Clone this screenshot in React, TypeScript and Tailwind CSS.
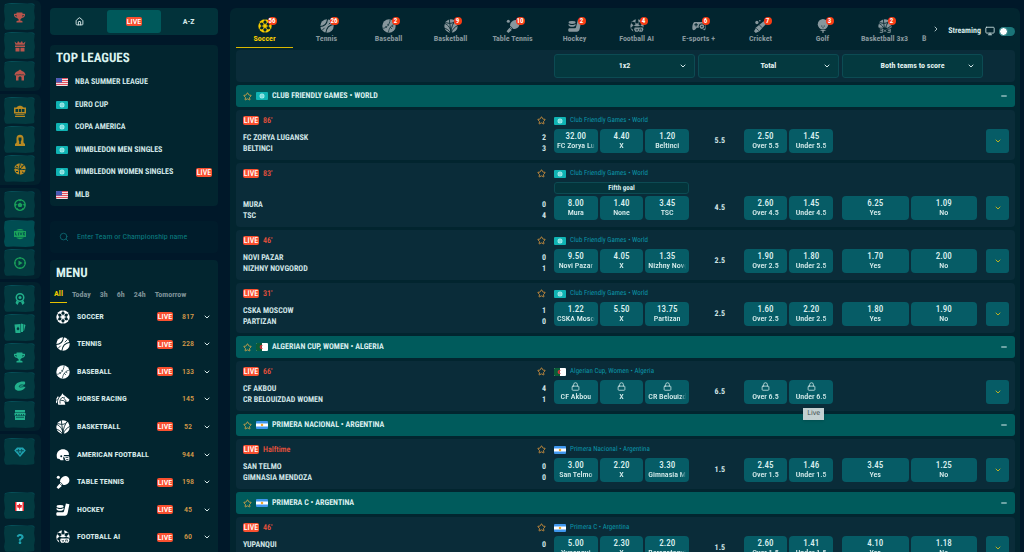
import React from 'react';
import { ChevronDown, ChevronRight, Home, Lock, Minus, Monitor, Search, Star } from 'lucide-react';
import { FaQuestion, FaTrophy } from 'react-icons/fa';

const CUT = '#03262f';

const spokes = [0, 60, 120, 180, 240, 300];

const SportIcon = ({ name, className }: { name: string; className?: string }) => (
  <svg viewBox="0 0 24 24" className={className} fill="currentColor" aria-hidden="true">
    {name === 'soccer' && (
      <>
        <circle cx="12" cy="12" r="11.5" />
        {spokes.map((a) => (
          <g key={a} transform={`rotate(${a} 12 12)`} fill={CUT}>
            <path d="M12 8.6 L9 6.5 L10 3.5 H14 L15 6.5 Z" />
            <path d="M11.3 0 H12.7 V4 H11.3 Z" />
          </g>
        ))}
        <circle cx="12" cy="12" r="4" stroke={CUT} strokeWidth="0.8" />
      </>
    )}
    {name === 'tennis' && (
      <>
        <circle cx="12" cy="12" r="11.5" />
        <path d="M0 13 C7 13 12 8 13 0 M24 9 C17 10 11 15 10 24" fill="none" stroke={CUT} strokeWidth="1.8" />
        <path d="M3 20 L8 15 M15 9 L20 4" fill="none" stroke={CUT} strokeWidth="1.4" />
      </>
    )}
    {name === 'baseball' && (
      <>
        <circle cx="12" cy="12" r="11.5" />
        <path d="M2 16 C8 15 13 10 14 1 M22 9 C17 10 12 15 11 23" fill="none" stroke={CUT} strokeWidth="1.2" />
        <path d="M6 12 L8 15 M9 9 L12 11 M14 14 L17 17 M17 11 L19 14" fill="none" stroke={CUT} strokeWidth="1.2" />
      </>
    )}
    {(name === 'basketball' || name === 'basketball3') && (
      <>
        <circle cx="12" cy="12" r="11.5" />
        <path
          d="M12 24 L9 0 M12 24 C12 14 4 8 0 7 M12 24 C8 19 4 16 0 16 M12 24 C12 14 16 6 20 2 M12 24 C15 17 19 13 24 11 M2 5 C8 9 16 8 19 3"
          fill="none"
          stroke={CUT}
          strokeWidth="1.5"
        />
        {name === 'basketball3' && (
          <>
            <rect x="0" y="15" width="24" height="9" fill={CUT} />
            <path d="M3 17 H8 V23 H3 M4 20 H8 M10 18 L14 22 M14 18 L10 22 M16 17 H21 V23 H16 M17 20 H21" fill="none" stroke="currentColor" strokeWidth="1.5" />
          </>
        )}
      </>
    )}
    {name === 'horse' && (
      <>
        <path d="M4 22 C2 17 4 10 9 6 L11 2 L13 5 C16 6 18 9 23 13 L22 16 L19 17 L14 15 L16 22 Z" />
        <path d="M1 13 L4 8 M0 19 L2 14" stroke="currentColor" strokeWidth="2" />
        <path d="M7 20 C6 14 8 10 12 9 M12 9 L18 16 M8 14 L14 15" fill="none" stroke={CUT} strokeWidth="1.4" />
        <circle cx="14" cy="9" r="1" fill={CUT} />
      </>
    )}
    {name === 'american' && (
      <>
        <path d="M2 18 C-1 8 5 2 12 2 C19 2 23 7 22 12 L14 12 L12 16 L13 21 H8 L6 19 Z" />
        <path d="M12 15 H22 V21 H17 L15 15 M16 18 H22" fill="none" stroke="currentColor" strokeWidth="1.7" />
        <circle cx="9" cy="14" r="1.7" fill={CUT} />
      </>
    )}
    {name === 'tabletennis' && (
      <>
        <path d="M7 15 C6 10 8 5 12 3 C17 0 23 3 23 9 C23 15 17 18 10 17 Z" />
        <path d="M6 15 L10 19 L4 24 L1 21 Z" />
        <circle cx="4" cy="4" r="2.6" />
        <path d="M6 11 L14 19" stroke={CUT} strokeWidth="1.3" />
      </>
    )}
    {name === 'hockey' && (
      <>
        <path d="M17 1 L23 2 L20 17 C19 21 17 22 13 22 H2 C0 22 0 16 2 16 H11 C13 16 14 15 14 13 Z" />
        <ellipse cx="7" cy="6" rx="6" ry="2.4" />
        <path d="M1 8 C3 11 11 11 13 8 V11 C11 14 3 14 1 11 Z" />
      </>
    )}
    {name === 'footballai' && (
      <>
        <circle cx="12" cy="12" r="11.5" />
        {spokes.map((a) => (
          <path key={a} transform={`rotate(${a} 12 11)`} d="M12 8 L9 6 L10.5 0 H13.5 L15 6 Z" fill={CUT} />
        ))}
        <rect x="5" y="12.5" width="19" height="11.5" rx="4" fill={CUT} />
        <path d="M8 14.5 H22 L23 18 L21 22 H16.5 L15 20.5 L13.5 22 H9 L7 18 Z" />
        <path d="M10 17 L12 20 L13.5 17 M16.5 20 V17 H19.5 V20" fill="none" stroke={CUT} strokeWidth="1.2" />
      </>
    )}
    {name === 'esports' && (
      <>
        <path d="M4 5 H20 C23 7 24 14 23 18 C21 21 18 18 16 15 H8 C6 18 3 21 1 18 C0 14 1 7 4 5 Z" />
        <path d="M7 7 V13 M4 10 H10" stroke={CUT} strokeWidth="1.8" />
        <circle cx="17" cy="13" r="5.5" fill={CUT} />
        <circle cx="17" cy="13" r="4" />
        <circle cx="17" cy="13" r="1.4" fill={CUT} />
      </>
    )}
    {name === 'cricket' && (
      <>
        <path d="M19 2 L23 6 L9 21 L3 24 L0 21 L4 14 Z" />
        <circle cx="5" cy="6" r="2.8" />
        <circle cx="10" cy="3" r="1.4" />
        <path d="M4 16 L8 20 M9 10 L14 15" stroke={CUT} strokeWidth="1.2" />
      </>
    )}
    {name === 'golf' && (
      <>
        <circle cx="12" cy="9" r="9" />
        <path d="M6 19 H18 L13 21 V24 H11 V21 Z" />
        <circle cx="10" cy="12" r="1" fill={CUT} />
        <circle cx="14" cy="12" r="1" fill={CUT} />
        <circle cx="12" cy="15" r="1" fill={CUT} />
      </>
    )}
  </svg>
);

const RailIcon = ({ name }: { name: string }) => {
  if (name === 'trophy') return <FaTrophy className="size-[11px]" />;
  if (name === 'help') return <FaQuestion className="size-[10px]" />;
  if (name === 'canada') {
    return (
      <svg viewBox="0 0 18 18" className="size-[9px]" aria-hidden="true">
        <rect width="18" height="18" fill="#fff" />
        <path d="M0 0 H3 V18 H0 Z M15 0 H18 V18 H15 Z" fill="#e8242c" />
        <path d="M9 2.5 L10.8 6 L14 6 L13 11.5 L9.8 11.5 V15 H8.2 V11.5 L5 11.5 L4 6 L7.2 6 Z" fill="#e8242c" />
      </svg>
    );
  }
  return (
    <svg viewBox="0 0 24 24" className="size-3" fill="currentColor" aria-hidden="true">
      {name === 'bonus' && (
        <path d="M1 3 L6 7 L8 2 L12 6 L16 2 L18 7 L23 3 L21 9.5 H3 Z M2 11 H22 V14 H2 Z M3 15.5 H11 V23 H3 Z M13 15.5 H21 V23 H13 Z" />
      )}
      {name === 'house' && (
        <>
          <path d="M12 1 L16 4 C21 6 23 9 23 12 L20 14 V23 H15 V17 C15 14 9 14 9 17 V23 H4 V14 L1 12 C1 9 3 6 8 4 Z" />
          <path d="M3 12.5 C6 10 9 13 12 11 C15 13 18 10 21 12.5" fill="none" stroke="#033a40" strokeWidth="1.3" />
        </>
      )}
      {name === 'slots' && (
        <>
          <path d="M5 5 C8 0 16 0 19 5 H24 V17 H0 V5 Z M3 18.5 H21 V20 H3 Z M2 21.5 H22 V24 H2 Z" />
          <path d="M3 8 H8 V14 H3 Z M9.5 8 H14.5 V14 H9.5 Z M16 8 H21 V14 H16 Z" fill="#033a40" />
        </>
      )}
      {name === 'dealer' && (
        <>
          <path d="M5 17 V8 C5 -1 19 -1 19 8 V17 L22 20 V24 H2 V20 Z" />
          <path d="M9 7 H15 V12 L13.5 15 V20 H10.5 V15 L9 12 Z" fill="#033a40" />
        </>
      )}
      {name === 'games' && (
        <>
          <circle cx="12" cy="12" r="11.5" />
          <path
            d="M12 0 C14 5 8 8 12 12 C16 15 19 11 24 14 M0 11 C5 8 8 14 12 12 C14 9 17 10 19 4 M12 12 C9 16 13 19 10 24 M4 6 L8 8 M4 17 L8 17 M16 5 V8 M16 18 L19 19"
            fill="none"
            stroke="#033a40"
            strokeWidth="2"
          />
        </>
      )}
      {name === 'soccer' && (
        <>
          <circle cx="12" cy="12" r="10.5" fill="none" stroke="currentColor" strokeWidth="2.5" />
          <path d="M12 7 L17 11 L15 16 H9 L7 11 Z M8 1 H16 L12 5 Z M1 9 L6 10 L3 16 Z M23 9 L18 10 L21 16 Z M7 18 L10 23 L4 20 Z M17 18 L14 23 L20 20 Z" />
        </>
      )}
      {name === 'live' && (
        <>
          <path d="M5 4 C9 1 15 1 19 4 V5 H5 Z M0 6 H24 V18 H0 Z M5 19 H19 V20 C15 23 9 23 5 20 Z" />
          <path d="M3 9 V14 H6 M9 9 V15 M12 9 L14 14 L16 9 M22 9 H19 V14 H22 M19 12 H22" fill="none" stroke="#004d52" strokeWidth="1.5" />
        </>
      )}
      {name === 'play' && (
        <>
          <circle cx="12" cy="12" r="10.5" fill="none" stroke="currentColor" strokeWidth="2.5" />
          <path d="M9 7 L17 12 L9 17 Z M11 0 H13 V4 H11 Z M11 20 H13 V24 H11 Z M0 11 H4 V13 H0 Z M20 11 H24 V13 H20 Z" />
        </>
      )}
      {name === 'award' && (
        <>
          <circle cx="12" cy="9" r="7.5" fill="none" stroke="currentColor" strokeWidth="3" />
          <circle cx="12" cy="9" r="3" />
          <path d="M5 15 L10 18 L7 24 L3 20 Z M19 15 L14 18 L17 24 L21 20 Z" />
        </>
      )}
      {name === 'cards' && (
        <>
          <path d="M1 5 L13 4 V22 H3 Z M14 3 L18 4 V20 H14 Z M19 4 L23 6 L20 18 H19 Z" />
          <path d="M8 9 L11 14 L8 17 L5 14 Z" fill="#033a40" />
        </>
      )}
      {name === 'virtual' && (
        <>
          <path d="M2 18 C-1 8 9 2 21 3 C24 6 22 10 18 11 L23 14 C20 22 6 24 2 18 Z" />
          <path d="M22 11 C14 8 9 11 11 14 C13 15 17 13 22 13" fill="none" stroke="#033a40" strokeWidth="1.5" />
        </>
      )}
      {name === 'shop' && (
        <>
          <path d="M2 2 H22 V7 H2 Z M1 8 H23 V13 H1 Z M2 14 H22 V22 H2 Z" />
          <path d="M4 16.5 H20 M5 10 V13 M10 10 V13 M15 10 V13 M19 10 V13" stroke="#033a40" strokeWidth="1.5" />
        </>
      )}
      {name === 'gem' && (
        <>
          <path d="M6 3 H18 L23.5 9 L12 22 L0.5 9 Z" />
          <path d="M4 9.5 H20 M9 6 L8 10 L12 17 L16 10 L15 6" fill="none" stroke="#033a40" strokeWidth="1.5" />
        </>
      )}
    </svg>
  );
};

const railGroups = [
  { color: 'text-[#b9544c]', items: ['trophy', 'bonus', 'house'] },
  { color: 'text-[#b98a22]', items: ['slots', 'dealer', 'games'] },
  { color: 'text-[#1aa05a]', items: ['soccer', 'live', 'play'] },
  { color: 'text-[#22b08c]', items: ['award', 'cards', 'trophy', 'virtual', 'shop'] },
];

const RailButton = ({ name }: { name: string }) => (
  <button
    aria-label={name}
    className={`flex h-[27px] w-[31px] shrink-0 items-center justify-center rounded-[4px] border-t border-[#07515a] [clip-path:polygon(2%_4%,25%_0,75%_3%,100%_1%,97%_30%,100%_55%,97%_75%,99%_97%,70%_100%,30%_98%,3%_100%,0_80%,3%_60%,0_30%)] ${
      name === 'live' ? 'bg-[#004d52]' : 'bg-[#033a40]'
    }`}
  >
    <RailIcon name={name} />
  </button>
);

const Rail = () => (
  <nav className="flex w-[41px] shrink-0 flex-col gap-[3px]">
    {railGroups.map((group, i) => (
      <div key={i} className={`flex flex-col items-start gap-[2px] rounded-r-md bg-[#02212d] py-[3px] pl-1 ${group.color}`}>
        {group.items.map((item) => (
          <RailButton key={item} name={item} />
        ))}
      </div>
    ))}
    <div className="flex flex-1 flex-col gap-[6px] rounded-tr-md bg-[#02212d] pt-1 pl-1 text-[#1fa3b0]">
      <RailButton name="gem" />
      <div className="mt-auto">
        <RailButton name="canada" />
      </div>
      <RailButton name="help" />
    </div>
  </nav>
);

const Flag = ({ code }: { code: string }) => (
  <svg viewBox="0 0 24 16" className="h-2 w-3 shrink-0 rounded-[1px]" aria-hidden="true">
    {code === 'world' && (
      <>
        <rect width="24" height="16" fill="#0fb3b3" />
        <circle cx="12" cy="8" r="5" fill="#a5ecec" />
        <path d="M7 8 H17 M12 3 V13" fill="none" stroke="#4fc9c9" strokeWidth="1" />
      </>
    )}
    {code === 'us' && (
      <>
        <rect width="24" height="16" fill="#f3dfe2" />
        <path d="M0 1 H24 M0 5 H24 M0 9 H24 M0 13 H24" stroke="#e4505c" strokeWidth="2" />
        <rect width="12" height="9" fill="#4a5bb5" />
      </>
    )}
    {code === 'dz' && (
      <>
        <rect width="24" height="16" fill="#fff" />
        <rect width="12" height="16" fill="#0b5c37" />
        <path d="M14 5 A4 4 0 1 0 14 11 A3 3 0 1 1 14 5 Z" fill="#d8323c" />
      </>
    )}
    {code === 'ar' && (
      <>
        <rect width="24" height="16" fill="#3f97ee" />
        <rect y="5" width="24" height="6" fill="#fff" />
        <circle cx="12" cy="8" r="2.5" fill="#f3a92e" />
      </>
    )}
  </svg>
);

const LiveBadge = () => (
  <span className="inline-flex h-[9px] w-4 shrink-0 items-center justify-center rounded-[2px] bg-[#f9502f] text-[8px] leading-[9px] font-medium text-white">
    LIVE
  </span>
);

const topLeagues = [
  { name: 'NBA SUMMER LEAGUE', flag: 'us' },
  { name: 'EURO CUP', flag: 'world' },
  { name: 'COPA AMERICA', flag: 'world' },
  { name: 'WIMBLEDON MEN SINGLES', flag: 'world' },
  { name: 'WIMBLEDON WOMEN SINGLES', flag: 'world', live: true },
  { name: 'MLB', flag: 'us' },
];

const menu = [
  { name: 'SOCCER', icon: 'soccer', count: 817, live: true },
  { name: 'TENNIS', icon: 'tennis', count: 228, live: true },
  { name: 'BASEBALL', icon: 'baseball', count: 133, live: true },
  { name: 'HORSE RACING', icon: 'horse', count: 145 },
  { name: 'BASKETBALL', icon: 'basketball', count: 52, live: true },
  { name: 'AMERICAN FOOTBALL', icon: 'american', count: 944 },
  { name: 'TABLE TENNIS', icon: 'tabletennis', count: 198, live: true },
  { name: 'HOCKEY', icon: 'hockey', count: 45, live: true },
  { name: 'FOOTBALL AI', icon: 'footballai', count: 60, live: true },
];

const Sidebar = () => (
  <aside className="ml-[9px] flex w-[168px] shrink-0 flex-col pt-2">
    <div className="grid h-[27px] shrink-0 grid-cols-3 rounded bg-[#02323a] p-[2px]">
      <button aria-label="Home" className="flex items-center justify-center text-[#d5e8e8]">
        <Home className="size-[9px]" strokeWidth={2.5} />
      </button>
      <button className="flex items-center justify-center rounded-[3px] bg-[#00595b]">
        <LiveBadge />
      </button>
      <button className="text-[8px] font-bold text-[#d5e8e8]">A-Z</button>
    </div>

    {/* Top leagues */}
    <section className="mt-[10px] shrink-0 rounded bg-[#02252f] px-[6px] pt-[6px]">
      <h2 className="text-[13px] leading-4 font-bold text-[#daf3ef]">TOP LEAGUES</h2>
      <ul className="mt-1 grid h-[135px] grid-rows-6">
        {topLeagues.map((league) => (
          <li key={league.name}>
            <a href="#" className="flex h-full items-center gap-[7px] text-[8px] font-bold text-[#cfe6e6]">
              <Flag code={league.flag} />
              <span className="flex-1">{league.name}</span>
              {league.live && <LiveBadge />}
            </a>
          </li>
        ))}
      </ul>
    </section>

    <label className="mt-[15px] flex h-8 shrink-0 items-center gap-2 rounded bg-[#001c2b] px-[9px] text-[#0c6a72]">
      <Search className="size-[10px]" />
      <input
        aria-label="Search"
        placeholder="Enter Team or Championship name"
        className="min-w-0 flex-1 bg-transparent text-[8px] outline-none placeholder:text-[#0b7c80]"
      />
    </label>

    {/* Sports menu */}
    <section className="mt-[7px] flex-1 rounded-t bg-[#02252f]">
      <h2 className="px-[6px] pt-[6px] text-[13px] leading-4 font-bold text-[#daf3ef]">MENU</h2>
      <div className="mt-1 flex h-[17px] text-[8px] font-bold text-[#7d9298]">
        <button className="w-[17px] border-b border-[#e6c200] text-[#f0cc00]">All</button>
        <button className="ml-[5px]">Today</button>
        <button className="ml-[9px]">3h</button>
        <button className="ml-[9px]">6h</button>
        <button className="ml-[9px]">24h</button>
        <button className="ml-[9px]">Tomorrow</button>
      </div>
      <ul className="grid h-[248px] grid-rows-9 px-[6px]">
        {menu.map((item) => (
          <li key={item.name}>
            <button className="flex h-full w-full items-center text-[8px] font-bold text-[#d5e8e8]">
              <SportIcon name={item.icon} className="size-[14px] text-white" />
              <span className="ml-[7px] flex-1 text-left">{item.name}</span>
              {item.live && <LiveBadge />}
              <span className="w-[30px] text-center font-medium text-[#d79c4a]">{item.count}</span>
              <ChevronDown className="mr-px size-2" strokeWidth={3} />
            </button>
          </li>
        ))}
      </ul>
    </section>
  </aside>
);

const sports = [
  { name: 'Soccer', icon: 'soccer', count: 56 },
  { name: 'Tennis', icon: 'tennis', count: 26 },
  { name: 'Baseball', icon: 'baseball', count: 2 },
  { name: 'Basketball', icon: 'basketball', count: 9 },
  { name: 'Table Tennis', icon: 'tabletennis', count: 10 },
  { name: 'Hockey', icon: 'hockey', count: 2 },
  { name: 'Football AI', icon: 'footballai', count: 4 },
  { name: 'E-sports +', icon: 'esports', count: 6 },
  { name: 'Cricket', icon: 'cricket', count: 7 },
  { name: 'Golf', icon: 'golf', count: 3 },
  { name: 'Basketball 3x3', icon: 'basketball3', count: 2 },
];

const SportTabs = () => (
  <header className="flex h-[42px] items-center">
    <div className="flex h-full min-w-0 flex-1 gap-[5px] overflow-hidden pb-[2px]">
      {sports.map((sport, i) => (
        <button
          key={sport.name}
          className={`flex w-[57px] shrink-0 flex-col items-center border-b pt-[11px] text-[8px] font-bold whitespace-nowrap ${
            i === 0 ? 'border-[#d9b800] text-[#f5cc00]' : 'border-transparent text-[#87979d]'
          }`}
        >
          <span className="relative">
            <SportIcon name={sport.icon} className="size-[14px]" />
            <span className="absolute -top-[2px] left-[10px] flex h-2 min-w-2 items-center justify-center rounded-full bg-[#f83c14] px-px text-[7px] font-bold text-white">
              {sport.count}
            </span>
          </span>
          <span className="leading-[11px]">{sport.name}</span>
        </button>
      ))}
      <span className="ml-1 shrink-0 pt-[25px] text-[8px] leading-[11px] font-bold text-[#87979d]">B</span>
    </div>
    <button aria-label="More sports" className="px-1 text-[#a9bfc2]">
      <ChevronRight className="size-2" strokeWidth={3} />
    </button>
    <label className="ml-1 flex items-center pt-1 text-[8px] font-bold text-[#d5e8e8]">
      Streaming
      <Monitor className="mx-1 size-[10px]" />
      <input
        type="checkbox"
        role="switch"
        className="h-[9px] w-4 appearance-none rounded-full bg-[#1a7478] before:block before:size-[9px] before:rounded-full before:border before:border-[#1a7478] before:bg-white"
      />
    </label>
  </header>
);

const markets = ['1x2', 'Total', 'Both teams to score'];

const Filters = () => (
  <div className="grid h-8 grid-cols-[minmax(0,1fr)_repeat(3,141px)_23px] items-center gap-[3px] rounded bg-[#0a2c39] pr-[6px] pl-[7px]">
    <span />
    {markets.map((market) => (
      <div key={market} className="relative flex items-center">
        <select
          aria-label={market}
          className="h-6 w-full appearance-none rounded-[3px] border border-[#0c4b53] bg-[#04393f] text-center text-[8px] font-bold text-[#e2f1f0] [text-align-last:center]"
        >
          <option>{market}</option>
        </select>
        <ChevronDown className="pointer-events-none absolute right-2 size-2 text-[#d5e8e8]" strokeWidth={3} />
      </div>
    ))}
  </div>
);

type Game = {
  time: string;
  teams: [string, string];
  score: [number, number];
  odds: [string, string][];
  special?: string;
  line: string;
  total: [string, string];
  btts?: [string, string];
  locked?: boolean;
};

const leagues: { name: string; label: string; flag: string; games: Game[] }[] = [
  {
    name: 'CLUB FRIENDLY GAMES • WORLD',
    label: 'Club Friendly Games • World',
    flag: 'world',
    games: [
      { time: "86'", teams: ['FC ZORYA LUGANSK', 'BELTINCI'], score: [2, 3], odds: [['32.00', 'FC Zorya Lugansk'], ['4.40', 'X'], ['1.20', 'Beltinci']], line: '5.5', total: ['2.50', '1.45'] },
      { time: "83'", teams: ['MURA', 'TSC'], score: [0, 4], special: 'Fifth goal', odds: [['8.00', 'Mura'], ['1.40', 'None'], ['3.45', 'TSC']], line: '4.5', total: ['2.60', '1.45'], btts: ['6.25', '1.09'] },
      { time: "46'", teams: ['NOVI PAZAR', 'NIZHNY NOVGOROD'], score: [0, 1], odds: [['9.50', 'Novi Pazar'], ['4.05', 'X'], ['1.35', 'Nizhny Novgorod']], line: '2.5', total: ['1.90', '1.80'], btts: ['1.70', '2.00'] },
      { time: "31'", teams: ['CSKA MOSCOW', 'PARTIZAN'], score: [1, 0], odds: [['1.22', 'CSKA Moscow'], ['5.50', 'X'], ['13.75', 'Partizan']], line: '2.5', total: ['1.60', '2.20'], btts: ['1.80', '1.90'] },
    ],
  },
  {
    name: 'ALGERIAN CUP, WOMEN • ALGERIA',
    label: 'Algerian Cup, Women • Algeria',
    flag: 'dz',
    games: [
      { time: "66'", teams: ['CF AKBOU', 'CR BELOUIZDAD WOMEN'], score: [4, 1], odds: [['', 'CF Akbou'], ['', 'X'], ['', 'CR Belouizdad']], line: '6.5', total: ['', ''], locked: true },
    ],
  },
  {
    name: 'PRIMERA NACIONAL • ARGENTINA',
    label: 'Primera Nacional • Argentina',
    flag: 'ar',
    games: [
      { time: 'Halftime', teams: ['SAN TELMO', 'GIMNASIA MENDOZA'], score: [0, 0], odds: [['3.00', 'San Telmo'], ['2.20', 'X'], ['3.30', 'Gimnasia Mendoza']], line: '1.5', total: ['2.45', '1.46'], btts: ['3.45', '1.25'] },
    ],
  },
  {
    name: 'PRIMERA C • ARGENTINA',
    label: 'Primera C • Argentina',
    flag: 'ar',
    games: [
      { time: "46'", teams: ['YUPANQUI', 'BERAZATEGUI RESERVE'], score: [0, 0], odds: [['5.00', 'Yupanqui'], ['2.30', 'X'], ['2.20', 'Berazategui']], line: '1.5', total: ['2.60', '1.41'], btts: ['4.10', '1.18'] },
    ],
  },
];

const OddButton = ({ odd, label }: { odd: string; label: string }) => (
  <button className="h-6 min-w-0 rounded-[4px] bg-[#065c66] px-[3px] text-[8px] leading-[10px] text-[#d9eeee]">
    {odd ? <span className="block text-[9px] leading-[10px] font-medium">{odd}</span> : <Lock className="mx-auto mb-px size-[9px]" />}
    <span className="block overflow-hidden font-medium whitespace-nowrap [mask-image:linear-gradient(to_right,#000_85%,transparent)]">{label}</span>
  </button>
);

const GameRow = ({ game, label, flag }: { game: Game; label: string; flag: string }) => (
  <div className="grid grid-cols-[minmax(0,1fr)_repeat(3,141px)_23px] gap-[3px] rounded bg-[#0a2c39] py-[6px] pr-[6px] pl-[7px]">
    <div className="flex flex-col justify-between pr-[5px] text-[8px] font-bold text-[#cfe3e5]">
      <div className="flex h-[9px] items-center gap-1">
        <LiveBadge />
        <span className="flex-1 font-medium text-[#f0533c]">{game.time}</span>
        <Star className="size-[9px] text-[#c98d3e]" strokeWidth={2.5} />
      </div>
      <div className="leading-[11px]">
        {game.teams.map((team, i) => (
          <div key={team} className="flex justify-between">
            <span>{team}</span>
            <span>{game.score[i]}</span>
          </div>
        ))}
      </div>
    </div>

    {/* 1x2 */}
    <div className="pr-[6px] pb-px">
      <div className="flex h-[9px] items-center gap-1 text-[7px] whitespace-nowrap text-[#0a95a8]">
        <Flag code={flag} />
        {label}
      </div>
      {game.special && (
        <div className="mt-1 -mb-[2px] h-3 rounded-[3px] border border-[#0c4b53] bg-[#04343b] text-center text-[7px] leading-[10px] font-bold text-[#d9eeee]">
          {game.special}
        </div>
      )}
      <div className="mt-1 grid grid-cols-3 gap-[2px]">
        {game.odds.map(([odd, name]) => (
          <OddButton key={name} odd={odd} label={name} />
        ))}
      </div>
    </div>

    {/* Total */}
    <div className="grid grid-cols-3 items-end gap-[2px] pr-[6px] pb-px">
      <span className="text-center text-[8px] leading-6 font-bold text-[#cfe3e5]">{game.line}</span>
      <OddButton odd={game.total[0]} label={`Over ${game.line}`} />
      <div className="relative grid">
        <OddButton odd={game.total[1]} label={`Under ${game.line}`} />
        {game.locked && (
          <span role="tooltip" className="absolute top-7 left-[14px] z-10 bg-[#c3d0d1] px-1 font-['Open_Sans',sans-serif] text-[7px] leading-3 text-[#3d4a4c] shadow">
            Live
          </span>
        )}
      </div>
    </div>

    {/* Both teams to score */}
    <div className="grid grid-cols-2 items-end gap-[2px] pr-[6px] pb-px">
      {game.btts && (
        <>
          <OddButton odd={game.btts[0]} label="Yes" />
          <OddButton odd={game.btts[1]} label="No" />
        </>
      )}
    </div>

    <div className="grid items-end pb-px">
      <button aria-label="Show all markets" className="flex h-6 items-center justify-center rounded-[3px] bg-[#065c66] text-[#b9b023]">
        <ChevronDown className="size-2" strokeWidth={3} />
      </button>
    </div>
  </div>
);

const App = () => (
  <div className="flex h-screen overflow-hidden bg-[#001829] pr-1 font-['Roboto_Condensed',Roboto,sans-serif] [text-rendering:geometricPrecision]">
    <Rail />
    <Sidebar />
    <main className="mt-2 ml-3 min-w-0 flex-1 rounded-t-md bg-[#02252f] pr-[5px] pl-[6px]">
      <SportTabs />
      <Filters />
      <div className="mt-[3px] flex flex-col gap-[3px]">
        {leagues.map((league) => (
          <React.Fragment key={league.name}>
            <div className="flex h-[22px] items-center rounded-[3px] bg-[#005b5c] px-[7px] text-[8px] font-bold text-[#d9eeee]">
              <Star className="size-[9px] text-[#c9a04a]" strokeWidth={2.5} />
              <span className="ml-1 flex">
                <Flag code={league.flag} />
              </span>
              <h3 className="ml-1 flex-1">{league.name}</h3>
              <button aria-label="Collapse">
                <Minus className="size-2" strokeWidth={3} />
              </button>
            </div>
            {league.games.map((game) => (
              <GameRow key={game.teams[0]} game={game} label={league.label} flag={league.flag} />
            ))}
          </React.Fragment>
        ))}
      </div>
    </main>
  </div>
);

export default App;
